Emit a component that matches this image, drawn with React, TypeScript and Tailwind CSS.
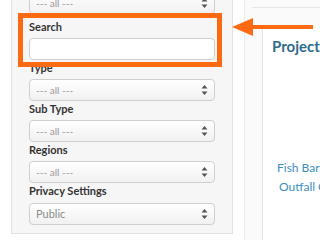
import React from "react";

function Arrows() {
  return (
    <svg width="7" height="11" viewBox="0 0 7 11" className="absolute right-[6px] top-1/2 -translate-y-1/2">
      <polygon points="3.5,0.5 6.5,4 0.5,4" fill="#555" />
      <polygon points="3.5,10.5 6.5,7 0.5,7" fill="#555" />
    </svg>
  );
}

function Select({ text, className = "" }: { text: string; className?: string }) {
  return (
    <div
      className={`relative h-[22px] w-[186px] rounded-[4px] border border-[#cfcfcf] bg-gradient-to-b from-[#ffffff] to-[#f1f1f1] pl-[6px] flex items-center ${className}`}
    >
      <span className="text-[10px] text-[#9a9a9a]">{text}</span>
      <Arrows />
    </div>
  );
}

function Label({ text, className = "" }: { text: string; className?: string }) {
  return (
    <div className={`text-[11px] font-bold text-[#333] leading-[14px] h-[19px] pt-[1px] ${className}`}>{text}</div>
  );
}

export default function App() {
  return (
    <div
      className="relative w-[320px] h-[240px] overflow-hidden bg-white"
      style={{ fontFamily: "Lato, 'Liberation Sans', sans-serif" }}
    >
      <div className="flex h-full">
        <div className="w-[11px] shrink-0" />
        <div className="w-[222px] shrink-0 h-[234px] bg-[#f6f6f6] border-l border-r border-b border-[#e2e2e2] pl-[17px] flex flex-col">
          <Select text="--- all ---" className="-mt-[8px]" />
          <Label text="Search" className="mt-[5px]" />
          <div className="h-[22px] w-[186px] rounded-[4px] border border-[#cfcfcf] bg-white" />
          <Label text="Type" className="h-[18px]" />
          <Select text="--- all ---" />
          <Label text="Sub Type" />
          <Select text="--- all ---" />
          <Label text="Regions" />
          <Select text="--- all ---" />
          <Label text="Privacy Settings" className="h-[20px]" />
          <div className="relative h-[22px] w-[186px] rounded-[4px] border border-[#cfcfcf] bg-gradient-to-b from-[#ffffff] to-[#f1f1f1] pl-[6px] flex items-center">
            <span className="text-[11px] text-[#8a8a8a]">Public</span>
            <Arrows />
          </div>
        </div>
        <div className="w-[11px] shrink-0" />
        <div className="flex-1 bg-[#fafafa] border-l border-[#ececec] pl-[7px] pt-[7px]">
          <div className="border-t border-[#e6e6e6] h-full pl-[10px] pt-[20px]">
            <div className="h-full border-l border-[#d8e6ee] bg-white pl-[9px] pt-[8px]">
              <div className="text-[15px] font-bold text-[#2e6b8c] leading-[20px]">Project</div>
              <div className="mt-[102px] text-[12px] text-[#3a8fc2] leading-[19px]">
                <div className="pl-[5px] whitespace-nowrap">Fish Bar</div>
                <div className="pl-[7px] whitespace-nowrap">Outfall C</div>
              </div>
            </div>
          </div>
        </div>
      </div>
      <div className="absolute left-[18px] top-[13px] w-[204px] h-[54px] border-[5px] border-[#fd6a12]" />
      <svg className="absolute left-0 top-0" width="320" height="240">
        <polygon points="232,27 253,18 253,36" fill="#fd6a12" />
        <rect x="252" y="25" width="61" height="4" fill="#fd6a12" />
      </svg>
    </div>
  );
}
